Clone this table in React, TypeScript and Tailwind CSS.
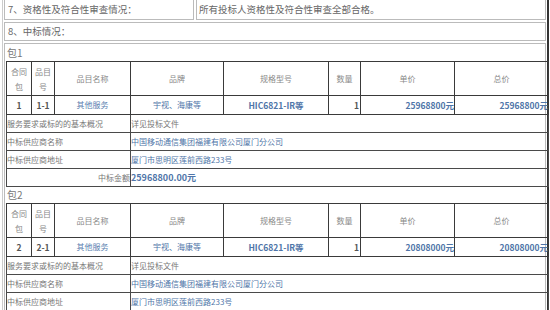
import React from "react";

type Pkg = {
  no: string;
  item: string;
  price: string;
  amount?: string;
};

const PKGS: Pkg[] = [
  { no: "1", item: "1-1", price: "25968800元", amount: "25968800.00元" },
  { no: "2", item: "2-1", price: "20808000元" },
];

const HEAD = ["品目名称", "品牌", "规格型号", "数量", "单价", "总价"];

function Package({ idx, p }: { idx: number; p: Pkg }) {
  const cell = "border border-[#3a3a3a] px-0 leading-none";
  const row = "border border-[#4a4a4a] px-0 leading-none";
  return (
    <div>
      <div className="h-[16px] pl-[1px] text-[10px] leading-[16px] text-[#777]">包{idx}</div>
      <table className="w-[542px] table-fixed border-collapse text-[8px]">
        <colgroup>
          <col className="w-[25px]" />
          <col className="w-[23px]" />
          <col className="w-[76px]" />
          <col className="w-[93px]" />
          <col className="w-[105px]" />
          <col className="w-[32px]" />
          <col className="w-[94px]" />
          <col className="w-[94px]" />
        </colgroup>
        <tbody>
          <tr className="h-[34px] text-[#888] text-center">
            <td className={`${cell} !leading-[15px]`}>合同<br />包</td>
            <td className={`${cell} !leading-[15px]`}>品目<br />号</td>
            {HEAD.map((h) => (
              <td key={h} className={cell}>{h}</td>
            ))}
          </tr>
          <tr className="h-[19px] text-center text-[8.5px]">
            <td className={`${cell} font-bold text-[#555]`}>{p.no}</td>
            <td className={`${cell} font-bold text-[#555]`}>{p.item}</td>
            <td className={`${cell} text-[8px] text-[#5a7fb0]`}>其他服务</td>
            <td className={`${cell} text-[8px] text-[#4f75a8]`}>宇视、海康等</td>
            <td className={`${cell} font-bold text-[#4f75a8]`}>HIC6821-IR等</td>
            <td className={`${cell} pr-[1px] text-right font-bold text-[#555]`}>1</td>
            <td className={`${cell} text-right font-bold text-[#4f75a8]`}>{p.price}</td>
            <td className={`${cell} text-right font-bold text-[#4f75a8]`}>{p.price}</td>
          </tr>
          <tr className="h-[18px] text-[#777]">
            <td colSpan={3} className={row}>服务要求或标的的基本概况</td>
            <td colSpan={5} className={row}>详见投标文件</td>
          </tr>
          <tr className="h-[18px] text-[#777]">
            <td colSpan={3} className={row}>中标供应商名称</td>
            <td colSpan={5} className={`${row} text-[#4f75a8]`}>中国移动通信集团福建有限公司厦门分公司</td>
          </tr>
          <tr className="h-[18px] text-[#777]">
            <td colSpan={3} className={row}>中标供应商地址</td>
            <td colSpan={5} className={`${row} text-[#4f75a8]`}>厦门市思明区莲前西路233号</td>
          </tr>
          {p.amount && (
            <tr className="h-[18px] text-[#777]">
              <td colSpan={3} className={`${row} text-right`}>中标金额</td>
              <td colSpan={5} className={`${row} text-[9px] font-bold text-[#4f75a8]`}>{p.amount}</td>
            </tr>
          )}
        </tbody>
      </table>
    </div>
  );
}

export default function App() {
  return (
    <div
      className="w-[550px] h-[310px] overflow-hidden bg-white pl-[2px]"
      style={{ fontFamily: '"Noto Sans CJK SC", "Liberation Sans", sans-serif' }}
    >
      <div className="w-[547px] border-l border-[#ccc] border-r-2 border-r-[#333] pl-[1px] pr-[1px]">
        <div className="flex gap-[2px] h-[20px] text-[9.5px] text-[#666]">
          <div className="w-[190px] border border-t-0 border-[#bbb] pl-[3px] leading-[19px]">7、资格性及符合性审查情况：</div>
          <div className="flex-1 border border-t-0 border-[#bbb] pl-[2px] leading-[19px]">所有投标人资格性及符合性审查全部合格。</div>
        </div>
        <div className="mt-[2px] h-[19px] border border-[#bbb] pl-[3px] text-[9.5px] leading-[17px] text-[#666]">
          8、中标情况：
        </div>
        <div className="mt-[2px] border border-b-0 border-[#bbb] pt-[1px] pl-[1px]">
          {PKGS.map((p, i) => (
            <Package key={p.no} idx={i + 1} p={p} />
          ))}
        </div>
      </div>
    </div>
  );
}
